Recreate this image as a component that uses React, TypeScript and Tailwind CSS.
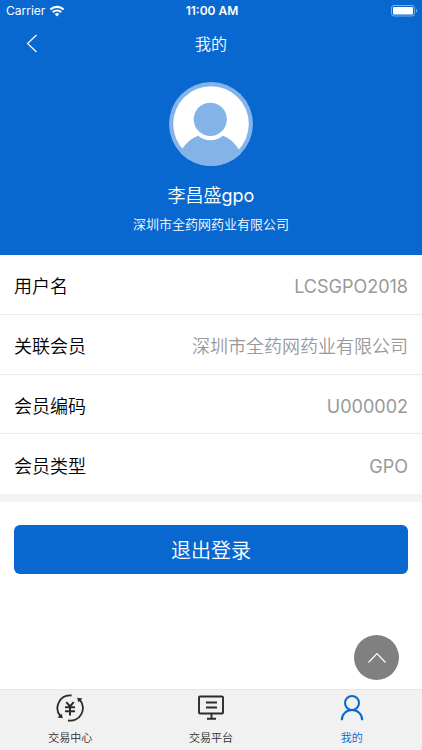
import * as React from "react";

type Tab = "center" | "platform" | "mine";

const profile = [
  { label: "用户名", value: "LCSGPO2018", latin: true },
  { label: "关联会员", value: "深圳市全药网药业有限公司", latin: false },
  { label: "会员编码", value: "U000002", latin: true },
  { label: "会员类型", value: "GPO", latin: true },
];

function WifiIcon() {
  return (
    <svg className="w-4 h-3" viewBox="0 0 16 12" fill="none" aria-hidden="true">
      <path d="M1.4 4.6a9.3 9.3 0 0 1 13.2 0" stroke="#fff" strokeWidth="2.2" />
      <path d="M3.8 7.2a5.9 5.9 0 0 1 8.4 0" stroke="#fff" strokeWidth="2" />
      <path d="M5.7 9.1a3.3 3.3 0 0 1 4.6 0L8 11.5z" fill="#fff" />
    </svg>
  );
}

function BatteryIcon() {
  return (
    <svg className="w-[27px] h-3" viewBox="0 0 27 12" aria-hidden="true">
      <rect x="0.5" y="0.5" width="23" height="10.5" rx="2.5" fill="none" stroke="#7fb0ea" />
      <rect x="2" y="2" width="20" height="7.5" rx="1" fill="#fff" />
      <path d="M25 4c1.6.5 1.6 3 0 3.5z" fill="#7fb0ea" />
    </svg>
  );
}

function Avatar() {
  return (
    <svg className="size-[84px]" viewBox="0 0 84 84" role="img" aria-label="头像">
      <circle cx="42" cy="42" r="42" fill="#84b3e8" />
      <circle cx="42" cy="42" r="37.8" fill="#fff" />
      <circle cx="41.3" cy="37.3" r="16.6" fill="#84b3e8" />
      <path
        d="M13 67.3C17 61 22.5 56 29.3 53.7C32.5 56.5 36.5 58.2 41.5 58.2S50.5 56.5 53.7 53.7C60.5 56 66 61 69.7 67.3L71 72.5A42 42 0 0 1 13 72.5z"
        fill="#84b3e8"
      />
    </svg>
  );
}

function TradeCenterIcon() {
  return (
    <svg className="size-7" viewBox="0 0 28 28" fill="none" stroke="currentColor" strokeWidth="1.8" aria-hidden="true">
      <path d="M15.6 1.5A12.6 12.6 0 0 0 4.5 22.2" />
      <path d="M1.5 23.5L6.8 24.2L5.7 19.8z" fill="currentColor" stroke="none" />
      <path d="M12 26.5A12.6 12.6 0 0 0 23.4 5.4" />
      <path d="M26.5 4.5L21.2 3.8L22.3 8.2z" fill="currentColor" stroke="none" />
      <path d="M10.3 8.2l3.7 4.3 3.7-4.3M9 13.2h10M9 17.3h10M14 12.5v9" strokeWidth="2" />
    </svg>
  );
}

function PlatformIcon() {
  return (
    <svg className="size-7" viewBox="0 0 28 28" fill="none" stroke="currentColor" strokeWidth="1.9" aria-hidden="true">
      <rect x="2" y="2.5" width="24" height="17" rx="1" />
      <path d="M9 8.5h11M9 13.5h11M14.5 19.5v5M10 24.8h9" />
    </svg>
  );
}

function MineIcon() {
  return (
    <svg className="size-7" viewBox="0 0 28 28" fill="none" stroke="currentColor" strokeWidth="2" aria-hidden="true">
      <circle cx="14" cy="9" r="7" />
      <path d="M3.8 26.2c0-6 4.3-10.2 10.2-10.2s10.2 4.2 10.2 10.2" />
    </svg>
  );
}

function ProfileRow(props: { label: string; value: string; latin: boolean }) {
  return (
    <div className="flex items-center justify-between px-3.5 pt-1.5 border-b border-[#ebebeb] last:border-b-0">
      <dt className="text-black">{props.label}</dt>
      <dd className={props.latin ? "text-[#999999] font-normal" : "text-[#999999]"}>
        {props.value}
      </dd>
    </div>
  );
}

function TabButton(props: {
  label: string;
  active: boolean;
  icon: React.ReactNode;
  onClick: () => void;
}) {
  return (
    <button
      type="button"
      aria-current={props.active ? "page" : undefined}
      className={
        "flex flex-1 flex-col items-center gap-1 pt-1 text-[11px] leading-6 " +
        (props.active ? "text-[#0a66cf]" : "text-[#2b2b2b]")
      }
      onClick={props.onClick}
    >
      {props.icon}
      <span>{props.label}</span>
    </button>
  );
}

function App() {
  const [tab, setTab] = React.useState<Tab>("mine");

  return (
    <div className="flex flex-col min-h-screen bg-white font-[Inter,'Noto_Sans_CJK_SC',sans-serif] font-[350]">
      <header className="bg-[#0968d0] text-white pb-5">
        <div className="grid grid-cols-3 items-center h-[22px] pl-1.5 pr-1 text-xs">
          <div className="flex items-center gap-1 font-normal">
            <span>Carrier</span>
            <WifiIcon />
          </div>
          <div className="text-center font-semibold">11:00 AM</div>
          <div className="flex justify-end">
            <BatteryIcon />
          </div>
        </div>
        <div className="grid grid-cols-3 items-center h-11">
          <button type="button" aria-label="返回" className="pl-6 w-12">
            <svg className="w-4 h-5" viewBox="0 0 16 20" fill="none" stroke="#fff" strokeWidth="1.2">
              <path d="M12.5 1L3.5 9.5l9 8.5" />
            </svg>
          </button>
          <h1 className="text-base font-[350] text-center">我的</h1>
        </div>
        <div className="flex flex-col items-center pt-4">
          <Avatar />
          <div className="mt-4 text-lg leading-7">
            李昌盛<span className="font-normal">gpo</span>
          </div>
          <div className="mt-1 text-[13px] leading-[21px]">深圳市全药网药业有限公司</div>
        </div>
      </header>

      <main className="flex-1">
        <dl className="grid grid-rows-4 h-[239px] text-lg">
          {profile.map((item) => (
            <ProfileRow key={item.label} {...item} />
          ))}
        </dl>
        <div className="h-2 bg-[#f4f4f4]" />
        <div className="px-3.5 pt-[23px] pb-5">
          <button type="button" className="w-full h-[49px] pt-0.5 rounded-md bg-[#0968d0] text-white text-xl">
            退出登录
          </button>
        </div>
      </main>

      <button
        type="button"
        aria-label="回到顶部"
        className="fixed right-[23px] bottom-[70px] flex items-center justify-center size-[45px] rounded-full bg-[#808080]"
        onClick={() => window.scrollTo({ top: 0 })}
      >
        <svg className="w-5 h-3" viewBox="0 0 20 12" fill="none" stroke="#fff" strokeWidth="1.2">
          <path d="M1.5 10.5L10 1.5l8.5 9" />
        </svg>
      </button>

      <nav className="sticky bottom-0 flex h-[61px] bg-[#f1f1f1] border-t border-[#e6e6e6]">
        <TabButton
          label="交易中心"
          active={tab === "center"}
          icon={<TradeCenterIcon />}
          onClick={() => setTab("center")}
        />
        <TabButton
          label="交易平台"
          active={tab === "platform"}
          icon={<PlatformIcon />}
          onClick={() => setTab("platform")}
        />
        <TabButton
          label="我的"
          active={tab === "mine"}
          icon={<MineIcon />}
          onClick={() => setTab("mine")}
        />
      </nav>
    </div>
  );
}

export default App;
